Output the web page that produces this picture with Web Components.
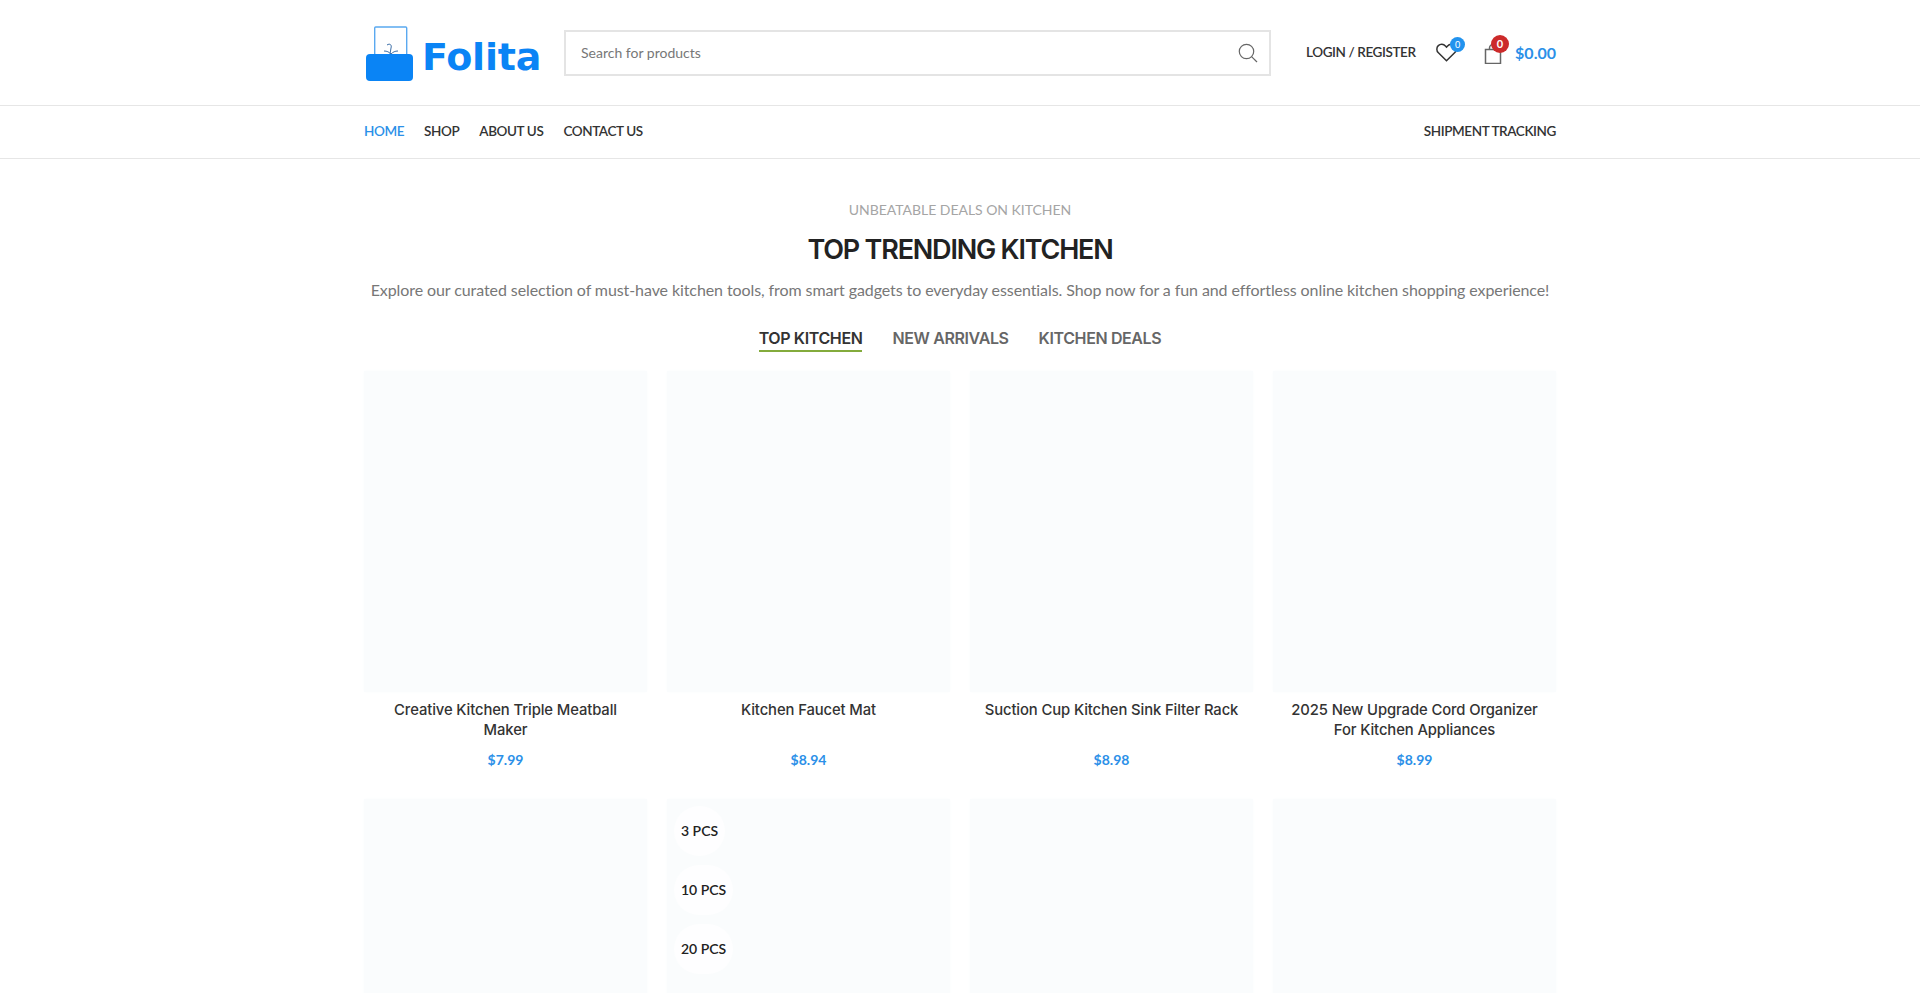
<!DOCTYPE html>
<html>
  <head>
    <meta charset="utf-8">
    <title>Folita</title>
<style>
  html, body { margin: 0; background: #fff; height: 100%; overflow: hidden; }
  body { font-family: "Lato", "Liberation Sans", sans-serif; color: #333; }
</style>
  </head>
  <body>
    <template id="logo_template">
      <style>
        :host { display: flex; align-items: flex-end; width: 176px; height: 56px; color: #0a84f5; }
        svg { display: block; flex: none; }
        span {
          font: 700 38px/1 "DejaVu Sans", "Inter", sans-serif;
          letter-spacing: -.2px;
          margin: 0 0 6px 8px;
        }
      </style>
      <svg width="48" height="56" viewBox="0 0 48 56">
        <rect x="8.7" y="1" width="32" height="30" rx="1" fill="#fff" stroke="#5aa9f0" stroke-width="1.4"/>
        <path d="M21 19c3-2 5 0 4 3M24 28l1-6M18 25c3 0 5 1 7 3M32 25c-3 0-5 1-7 3" fill="none" stroke="#3b6ea8" stroke-width="1"/>
        <rect x="0" y="28" width="47" height="27" rx="4" fill="#0a84f5"/>
      </svg>
      <span><slot></slot></span>
    </template>

    <template id="header_template">
      <style>
        :host { display: block; height: 105px; border-bottom: 1px solid #e6e6e6; }
        .wrap { width: 1192px; height: 105px; margin: 0 auto; display: flex; align-items: center; }
        folita-logo { margin-left: 2px; margin-top: 2px; }
        .search {
          margin-left: 22px; width: 707px; height: 46px; box-sizing: border-box;
          border: 2px solid #e4e4e4; display: flex; align-items: center;
          padding: 0 11px 0 15px; justify-content: space-between;
          font-size: 14px; color: #777;
        }
        .search svg { display: block; }
        .login { margin-left: 35px; width: 110px; font-size: 13.5px; font-weight: 600; letter-spacing: -.4px; color: #333; white-space: nowrap; margin-bottom: 1px; }
        .wish { margin-left: 20px; position: relative; width: 22px; height: 20px; margin-top: 1px; }
        .cart { margin-left: 26px; position: relative; width: 20px; height: 20px; margin-top: 2px; }
        .wish svg, .cart svg { display: block; }
        .badge {
          position: absolute; border-radius: 50%; color: #fff; text-align: center;
        }
        .wish .badge { left: 14px; top: -6px; width: 15px; height: 15px; background: #2293ee; font-size: 9px; line-height: 15px; }
        .cart .badge { left: 7px; top: -9px; width: 18px; height: 18px; background: #cc2a2a; font-size: 11px; line-height: 18px; font-weight: 700; }
        .total { margin-left: auto; font-size: 16px; font-weight: 700; color: #2b90e8; }
      </style>
      <div class="wrap">
        <folita-logo>Folita</folita-logo>
        <div class="search">
          <span>Search for products</span>
          <svg width="20" height="20" viewBox="0 0 20 20" fill="none" stroke="#666" stroke-width="1.2"><circle cx="8.5" cy="8.5" r="7.2"/><path d="M13.8 13.8 19 19"/></svg>
        </div>
        <div class="login">LOGIN / REGISTER</div>
        <div class="wish">
          <svg width="21" height="19" viewBox="0 0 21 19" fill="none" stroke="#333" stroke-width="1.5"><path d="M10.5 17.8 2.4 9.8C.3 7.7.4 4.5 2.3 2.6c2-1.9 5.2-1.8 7.1.3l1.1 1.2 1.1-1.2c1.9-2.1 5.1-2.2 7.1-.3 1.9 1.9 2 5.1-.1 7.2z"/></svg>
          <span class="badge">0</span>
        </div>
        <div class="cart">
          <svg width="18" height="20" viewBox="0 0 18 20" fill="none" stroke="#666" stroke-width="1.5"><path d="M1.5 5.5h15v14h-15zM5.5 5.5V4a3.5 3.5 0 0 1 7 0v1.5"/></svg>
          <span class="badge">0</span>
        </div>
        <div class="total">$0.00</div>
      </div>
    </template>

    <template id="nav_template">
      <style>
        :host { display: block; height: 52px; border-bottom: 1px solid #e6e6e6; }
        nav { width: 1192px; height: 49px; padding-bottom: 3px; margin: 0 auto; display: flex; align-items: center; gap: 20px; font-size: 13.5px; font-weight: 600; letter-spacing: -.4px; color: #333; }
        .on { color: #2b90e8; }
        .end { margin-left: auto; }
      </style>
      <nav>
        <span class="on">HOME</span><span>SHOP</span><span>ABOUT US</span><span>CONTACT US</span>
        <span class="end">SHIPMENT TRACKING</span>
      </nav>
    </template>

    <template id="head_template">
      <style>
        :host { display: block; text-align: center; padding-top: 41px; }
        .sub { font-size: 14px; line-height: 20px; color: #a5a5a5; letter-spacing: -.03px; }
        h2 { margin: 12px 0 0; font: 600 27px/36px "Inter", sans-serif; color: #222; letter-spacing: -1.2px; }
        p { margin: 10px 0 0; font-size: 16px; line-height: 24px; color: #777; letter-spacing: -.09px; }
        .tabs { display: flex; justify-content: center; gap: 30px; margin-top: 25px; font: 600 16px/22px "Inter", sans-serif; color: #666; letter-spacing: -.38px; }
        .tabs span { padding-bottom: 1px; border-bottom: 2px solid transparent; }
        .tabs .on { color: #333; border-color: #83ab3c; }
      </style>
      <div class="sub"><slot name="sub"></slot></div>
      <h2><slot name="title"></slot></h2>
      <p><slot name="text"></slot></p>
      <div class="tabs">
        <span class="on">TOP KITCHEN</span><span>NEW ARRIVALS</span><span>KITCHEN DEALS</span>
      </div>
    </template>

    <template id="card_template">
      <style>
        :host { display: block; text-align: center; }
        .pic { height: 321px; background: #fafcfd; box-shadow: 0 0 3px #fafcfd; position: relative; }
        h3 { margin: 8px 0 0; padding: 0 10px; height: 40px; font: 450 14.8px/20px "Inter", sans-serif; color: #333; letter-spacing: -.1px; }
        .price { margin-top: 10px; font-size: 14px; line-height: 20px; font-weight: 700; color: #2b90e8; }
        .price:empty { display: none; }
        .tags { position: absolute; left: 7px; top: 7px; display: flex; flex-direction: column; gap: 9px; align-items: flex-start; }
        ::slotted([slot="tag"]) {
          font-size: 14px; font-weight: 600; color: #222; background: rgba(255,255,255,.75); line-height: 50px; height: 50px;
          padding: 0 7px; border-radius: 25px; display: block;
        }
      </style>
      <div class="pic"><div class="tags"><slot name="tag"></slot></div></div>
      <h3><slot></slot></h3>
      <div class="price"></div>
    </template>

    <site-header></site-header>
    <site-nav></site-nav>
    <section-head>
      <span slot="sub">UNBEATABLE DEALS ON KITCHEN</span>
      <span slot="title">TOP TRENDING KITCHEN</span>
      <span slot="text">Explore our curated selection of must-have kitchen tools, from smart gadgets to everyday essentials. Shop now for a fun and effortless online kitchen shopping experience!</span>
    </section-head>
    <product-grid>
      <product-card price="$7.99">Creative Kitchen Triple Meatball Maker</product-card>
      <product-card price="$8.94">Kitchen Faucet Mat</product-card>
      <product-card price="$8.98">Suction Cup Kitchen Sink Filter Rack</product-card>
      <product-card price="$8.99">2025 New Upgrade Cord Organizer For Kitchen Appliances</product-card>
      <product-card></product-card>
      <product-card>
        <span slot="tag">3 PCS</span>
        <span slot="tag">10 PCS</span>
        <span slot="tag">20 PCS</span>
      </product-card>
      <product-card></product-card>
      <product-card></product-card>
    </product-grid>

<script>
function fromTemplate(id) {
  return class extends HTMLElement {
    constructor() {
      super();
      let copyOfTemplate = document.getElementById(id).content.cloneNode(true);
      this.attachShadow({mode: 'open'}).appendChild(copyOfTemplate);
    }
  };
}

customElements.define('folita-logo', fromTemplate('logo_template'));
customElements.define('site-header', fromTemplate('header_template'));
customElements.define('site-nav', fromTemplate('nav_template'));
customElements.define('section-head', fromTemplate('head_template'));

customElements.define('product-grid', class extends HTMLElement {
  constructor() {
    super();
    this.attachShadow({mode: 'open'}).innerHTML = `
      <style>
        :host { display: grid; grid-template-columns: repeat(4, 283px); column-gap: 20px; row-gap: 29px; width: 1192px; margin: 19px auto 0; }
      </style>
      <slot></slot>`;
  }
});

customElements.define('product-card', class extends HTMLElement {
  constructor() {
    super();
    let copyOfTemplate = document.getElementById('card_template').content.cloneNode(true);
    copyOfTemplate.querySelector('.price').textContent = this.getAttribute('price') || '';
    this.attachShadow({mode: 'open'}).appendChild(copyOfTemplate);
  }
});
</script>
  </body>
</html>
